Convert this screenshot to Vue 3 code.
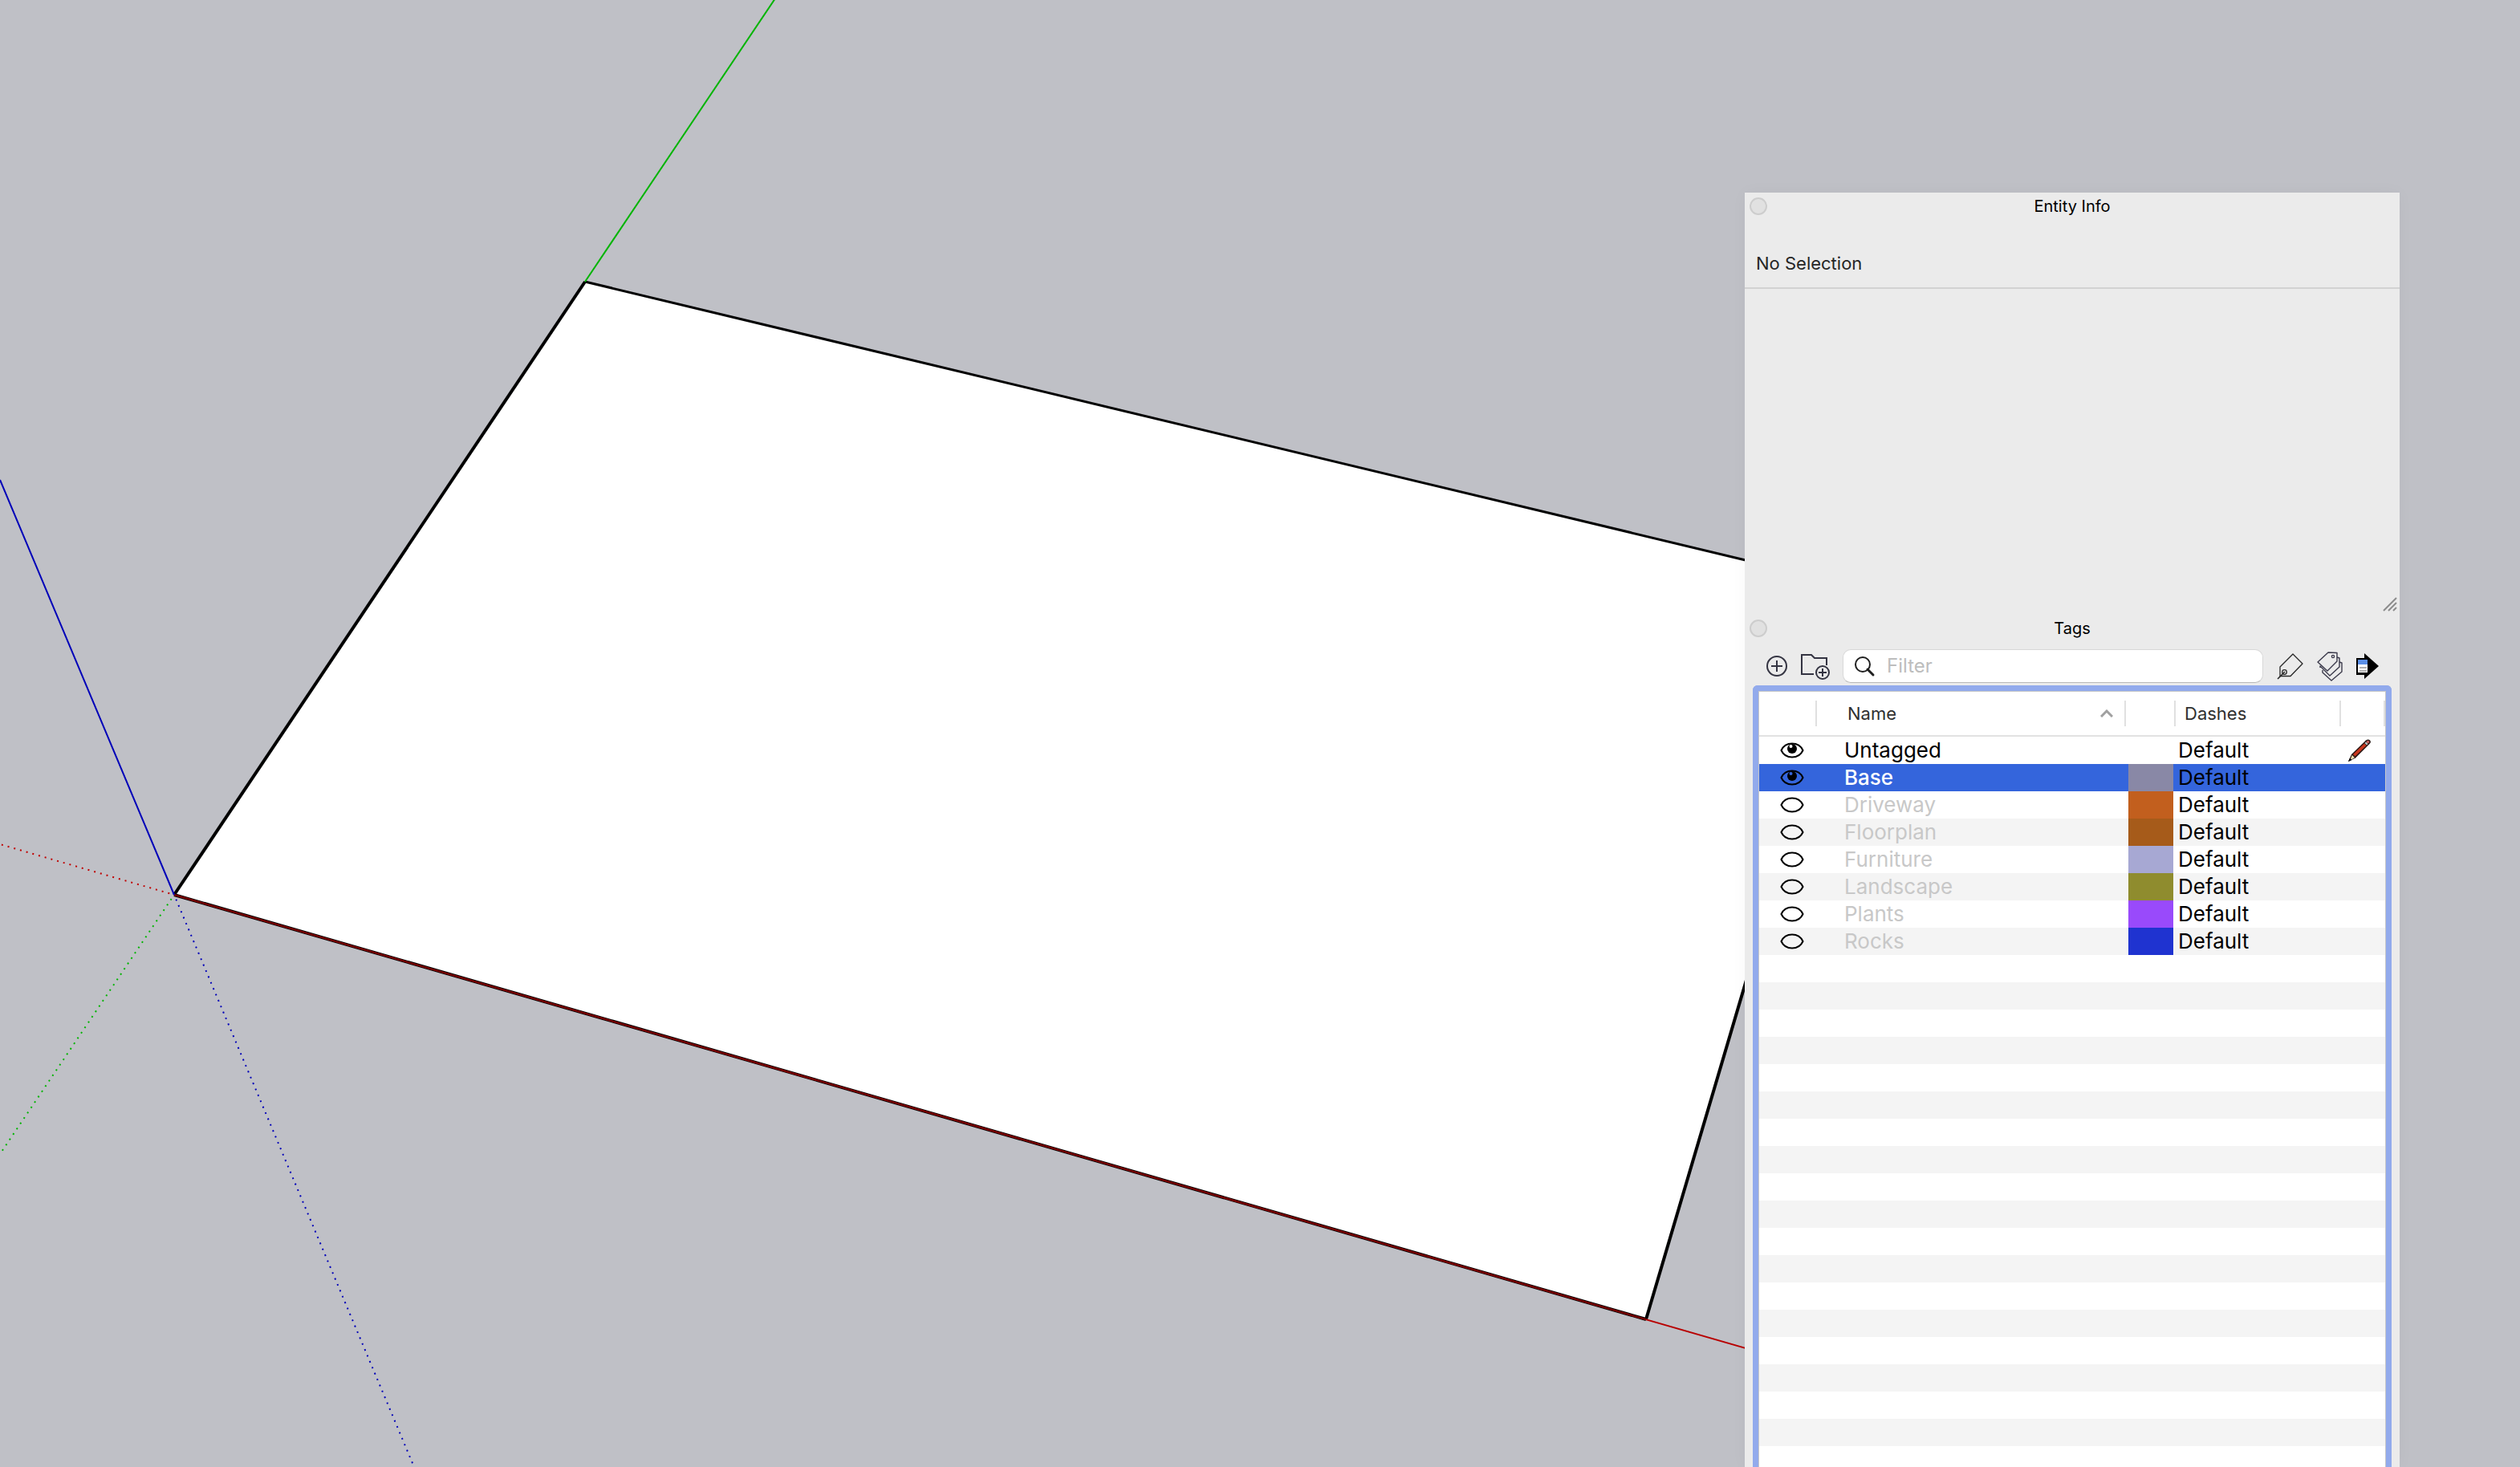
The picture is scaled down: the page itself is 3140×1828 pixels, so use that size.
<script setup>
import { ref } from 'vue'

const filter = ref('')
const selected = ref('Base')
const tags = ref([
  { name: 'Untagged', visible: true, color: '', dashes: 'Default', current: true },
  { name: 'Base', visible: true, color: '#8988a6', dashes: 'Default' },
  { name: 'Driveway', visible: false, color: '#c25f1e', dashes: 'Default' },
  { name: 'Floorplan', visible: false, color: '#a65b1a', dashes: 'Default' },
  { name: 'Furniture', visible: false, color: '#a7a8d3', dashes: 'Default' },
  { name: 'Landscape', visible: false, color: '#8f8c2e', dashes: 'Default' },
  { name: 'Plants', visible: false, color: '#994afb', dashes: 'Default' },
  { name: 'Rocks', visible: false, color: '#1f33d0', dashes: 'Default' },
])
</script>

<template>
  <main class="workspace">
    <svg class="model" viewBox="0 0 3140 1828" preserveAspectRatio="xMinYMin slice" aria-hidden="true">
      <polygon points="217,1115 729,351 2300,727 2300,802 2051,1644" fill="#fff" />
      <g fill="none" stroke="#000">
        <path d="M217 1115 729 351" stroke-width="4" />
        <path d="M729 351 2300 728" stroke-width="3" />
        <path d="M2051 1644 2300 802" stroke-width="4" />
        <path d="M217 1115 2051 1644" stroke-width="4" />
      </g>
      <g fill="none" stroke-width="2">
        <path d="M217 1115 2300 1716" stroke="#b80000" />
        <path d="M217 1115 2051 1644" stroke="#700000" />
        <path d="M729 351 966 -2" stroke="#00b400" />
        <path d="M217 1115 0 598" stroke="#0000b8" />
        <g stroke-dasharray="2 6">
          <path d="M217 1115 0 1052" stroke="#c00000" stroke-dashoffset="2" />
          <path d="M217 1115 0 1438" stroke="#00b400" stroke-dashoffset="2" />
          <path d="M217 1115 516 1828" stroke="#0000b8" stroke-dashoffset="2" />
        </g>
      </g>
    </svg>

    <aside class="panels">
      <section class="entity">
        <header class="titlebar">
          <button class="close" aria-label="Close Entity Info"></button>
          <h2>Entity Info</h2>
        </header>
        <p class="selection">No Selection</p>
        <div class="details">
          <svg class="grip" width="18" height="18" viewBox="0 0 18 18" aria-hidden="true">
            <path d="M1 17 17 1M7 17 17 7M13 17 17 13" stroke="#8c8c8c" stroke-width="2" />
          </svg>
        </div>
      </section>

      <section class="tags">
        <header class="titlebar">
          <button class="close" aria-label="Close Tags"></button>
          <h2>Tags</h2>
        </header>

        <div class="toolbar">
          <button class="tool" aria-label="Add tag">
            <svg width="28" height="28" viewBox="0 0 28 28" fill="none" stroke="#343442" stroke-width="2">
              <circle cx="14" cy="14" r="12" /><path d="M14 7v14M7 14h14" />
            </svg>
          </button>
          <button class="tool folder" aria-label="Add tag folder">
            <svg width="38" height="34" viewBox="0 0 38 34" fill="none" stroke="#343442" stroke-width="2">
              <path d="M17 27H2V3h12l4 4h15v9" />
              <circle cx="28" cy="25" r="8" /><path d="M28 20v10M23 25h10" />
            </svg>
          </button>
          <label class="search">
            <svg width="28" height="28" viewBox="0 0 28 28" fill="none" stroke="#1f1f1f">
              <circle cx="12" cy="12" r="9" stroke-width="2" /><path d="m18 18 7 7" stroke-width="3" stroke-linecap="round" />
            </svg>
            <input v-model="filter" type="text" placeholder="Filter" aria-label="Filter tags" />
          </label>
          <button class="tool" aria-label="Tag tool">
            <svg width="34" height="36" viewBox="0 0 34 36" fill="none" stroke="#262626" stroke-width="1.3">
              <path d="M20 3 32 15 17 30.500H4V19Z" stroke-linejoin="round" />
              <circle cx="9.500" cy="25.500" r="2.800" /><path d="M1 34 10 25" stroke-width="1.600" />
            </svg>
          </button>
          <button class="tool" aria-label="Color by tag">
            <svg width="34" height="38" viewBox="0 0 34 38" fill="none" stroke="#3b3a4b" stroke-width="1.400" stroke-linejoin="round">
              <path d="M15 2 26 2.500V13L14 25 2 14Z" /><circle cx="21" cy="7" r="1.600" />
              <path d="M26 8 29 9V20L17 31 5 19v2" />
              <path d="M29 14 32 15V26L19 37 8 27v-3" />
            </svg>
          </button>
          <button class="tool" aria-label="Details">
            <svg width="30" height="34" viewBox="0 0 30 34">
              <path d="M1 7h10V1L29 17 11 33v-5H1Z" fill="#000" />
              <path d="M3 9h12v16H3Z" fill="#fff" /><path d="M3 9h12v6H3Z" fill="#5b8fe6" />
              <path d="M5 19h9M5 23h9" stroke="#999" stroke-width="1.500" />
            </svg>
          </button>
        </div>

        <div class="list">
          <table>
            <colgroup>
              <col class="c-eye" /><col /><col class="c-color" /><col class="c-dash" /><col class="c-pen" />
            </colgroup>
            <thead>
              <tr>
                <th aria-label="Visible"></th>
                <th>
                  <div class="sort">
                    Name
                    <svg width="16" height="10" viewBox="0 0 16 10" fill="none" stroke="#a0a0a0" stroke-width="3">
                      <path d="M1 9 8 2l7 7" />
                    </svg>
                  </div>
                </th>
                <th aria-label="Color"></th>
                <th class="dash-head">Dashes</th>
                <th aria-label="Active"></th>
              </tr>
            </thead>
            <tbody>
              <tr
                v-for="tag in tags"
                :key="tag.name"
                :class="{ selected: tag.name === selected, hidden: !tag.visible }"
                @click="selected = tag.name"
              >
                <td class="eye">
                  <button :aria-label="'Toggle ' + tag.name" @click.stop="tag.visible = !tag.visible">
                    <svg width="30" height="20" viewBox="0 0 30 20" fill="none" stroke="#000" stroke-width="2">
                      <path d="M1.500 10C4 4.500 9 1.500 15 1.500S26 4.500 28.500 10C26 15.500 21 18.500 15 18.500S4 15.500 1.500 10Z" />
                      <template v-if="tag.visible">
                        <circle cx="15" cy="8" r="6" fill="#000" stroke="none" />
                        <circle cx="13.500" cy="5" r="2" :fill="tag.name === selected ? '#3465dc' : '#fff'" stroke="none" />
                      </template>
                    </svg>
                  </button>
                </td>
                <td class="name">{{ tag.name }}</td>
                <td class="color"><span v-if="tag.color" :style="{ background: tag.color }"></span></td>
                <td class="dash">{{ tag.dashes }}</td>
                <td class="pen">
                  <svg v-if="tag.current" width="28" height="28" viewBox="0 0 28 28">
                    <path d="M0 28 4 19 22 1.500Q25 -0.500 27 1.500T26.500 6L9 23.500Z" fill="#2a1714" />
                    <path d="M6 19 20 5.500l2.500 2.500L8.500 21.500Z" fill="#c8371f" />
                    <path d="m4.800 20 3.200 3-4 2.500-1-1Z" fill="#e8dcae" />
                    <path d="m20.500 5 1.500-1.500L24.500 6 23 7.500Z" fill="#b9c4c4" />
                    <circle cx="24.500" cy="3.500" r="1.800" fill="#c4625f" />
                    <path d="m0 28 1.800-4L4.500 26Z" />
                  </svg>
                </td>
              </tr>
            </tbody>
          </table>
          <div class="stripes"></div>
        </div>
      </section>
    </aside>
  </main>
</template>

<style>
body {
  margin: 0;
}
</style>

<style scoped>
.workspace {
  position: relative;
  display: flex;
  justify-content: flex-end;
  box-sizing: border-box;
  height: 100vh;
  padding: 240px 150px 0 0;
  overflow: hidden;
  background: #bfc0c6;
  font-family: Inter, "Liberation Sans", sans-serif;
  color: #000;
}
.model {
  position: absolute;
  inset: 0;
  width: 100%;
  height: 100%;
}
.panels {
  position: relative;
  display: flex;
  flex-direction: column;
  width: min(816px, 60vw);
  background: #ebebeb;
  box-shadow: 0 0 20px rgba(0, 0, 0, 0.03);
}
button {
  padding: 0;
  border: 0;
  background: none;
}
svg {
  display: block;
}
.titlebar {
  display: grid;
  grid-template-columns: 22px 1fr 22px;
  align-items: center;
  height: 34px;
  padding: 0 6px;
}
.close {
  box-sizing: border-box;
  width: 22px;
  height: 22px;
  border: 2px solid #cdcdcd;
  border-radius: 50%;
  background: #e1e1e1;
}
h2 {
  margin: 0;
  font-size: 20px;
  font-weight: 400;
  line-height: 24px;
  text-align: center;
}
.selection {
  margin: 0;
  padding: 40px 14px 16px;
  border-bottom: 2px solid #d2d2d2;
  color: #262626;
  font-size: 22px;
  line-height: 28px;
}
.details {
  display: flex;
  align-items: flex-end;
  justify-content: flex-end;
  height: 404px;
  padding: 0 3px 2px 0;
  box-sizing: border-box;
}
.tags {
  display: flex;
  flex: 1;
  flex-direction: column;
  min-height: 0;
  padding: 2px 10px 0;
}
.tags .titlebar {
  margin: 0 -10px;
}
.toolbar {
  display: flex;
  align-items: center;
  gap: 15px;
  box-sizing: border-box;
  height: 54px;
  padding: 6px 15px 0 16px;
}
.search {
  display: flex;
  flex: 1;
  align-items: center;
  gap: 14px;
  box-sizing: border-box;
  height: 42px;
  margin-right: 2px;
  padding: 0 12px;
  border: 1px solid #d8d8d8;
  border-bottom-color: #b8b8b8;
  border-radius: 10px;
  background: #fff;
}
input {
  flex: 1;
  min-width: 0;
  padding: 0;
  border: 0;
  outline: 0;
  background: none;
  color: #262626;
  font: 24px/30px Inter, "Liberation Sans", sans-serif;
}
input::placeholder {
  color: #bdbdbd;
  opacity: 1;
}
.list {
  display: flex;
  flex: 1;
  flex-direction: column;
  min-height: 0;
  border: 7px solid #92aaec;
  border-bottom: 0;
  border-radius: 6px 6px 0 0;
  background: #fff;
  box-shadow: inset 0 0 0 1px #c8c8c8;
  padding: 1px 1px 0;
}
table {
  width: 100%;
  border-collapse: separate;
  border-spacing: 0;
  table-layout: fixed;
}
.c-eye {
  width: 72px;
}
.c-color {
  width: 62px;
}
.c-dash {
  width: 206px;
}
.c-pen {
  width: 55px;
}
th {
  height: 54px;
  padding: 0;
  border-bottom: 2px solid #e2e2e2;
  background: linear-gradient(#e0e0e0, #e0e0e0) right center / 2px 32px no-repeat;
  color: #303030;
  font-size: 22px;
  font-weight: 400;
  line-height: 28px;
  text-align: left;
}
.sort {
  display: flex;
  align-items: center;
  justify-content: space-between;
  padding: 0 16px 0 38px;
}
.dash-head {
  padding-left: 11px;
}
td {
  height: 34px;
  padding: 0;
  font-size: 26px;
  line-height: 34px;
}
tbody tr:nth-child(even) {
  background: #f4f4f4;
}
tbody tr.selected {
  background: #3465dc;
}
.eye button {
  display: block;
  margin: 0 0 0 26px;
}
.name {
  padding-left: 34px;
}
.hidden .name {
  color: #c8c8c8;
}
.selected .name {
  color: #fff;
  font-weight: 500;
}
.color span {
  display: block;
  width: 56px;
  height: 34px;
  margin-left: 3px;
}
.dash {
  padding-left: 3px;
}
.pen svg {
  margin-left: 9px;
}
.stripes {
  flex: 1;
  background: repeating-linear-gradient(#fff 0 34px, #f4f4f4 34px 68px);
}
</style>
